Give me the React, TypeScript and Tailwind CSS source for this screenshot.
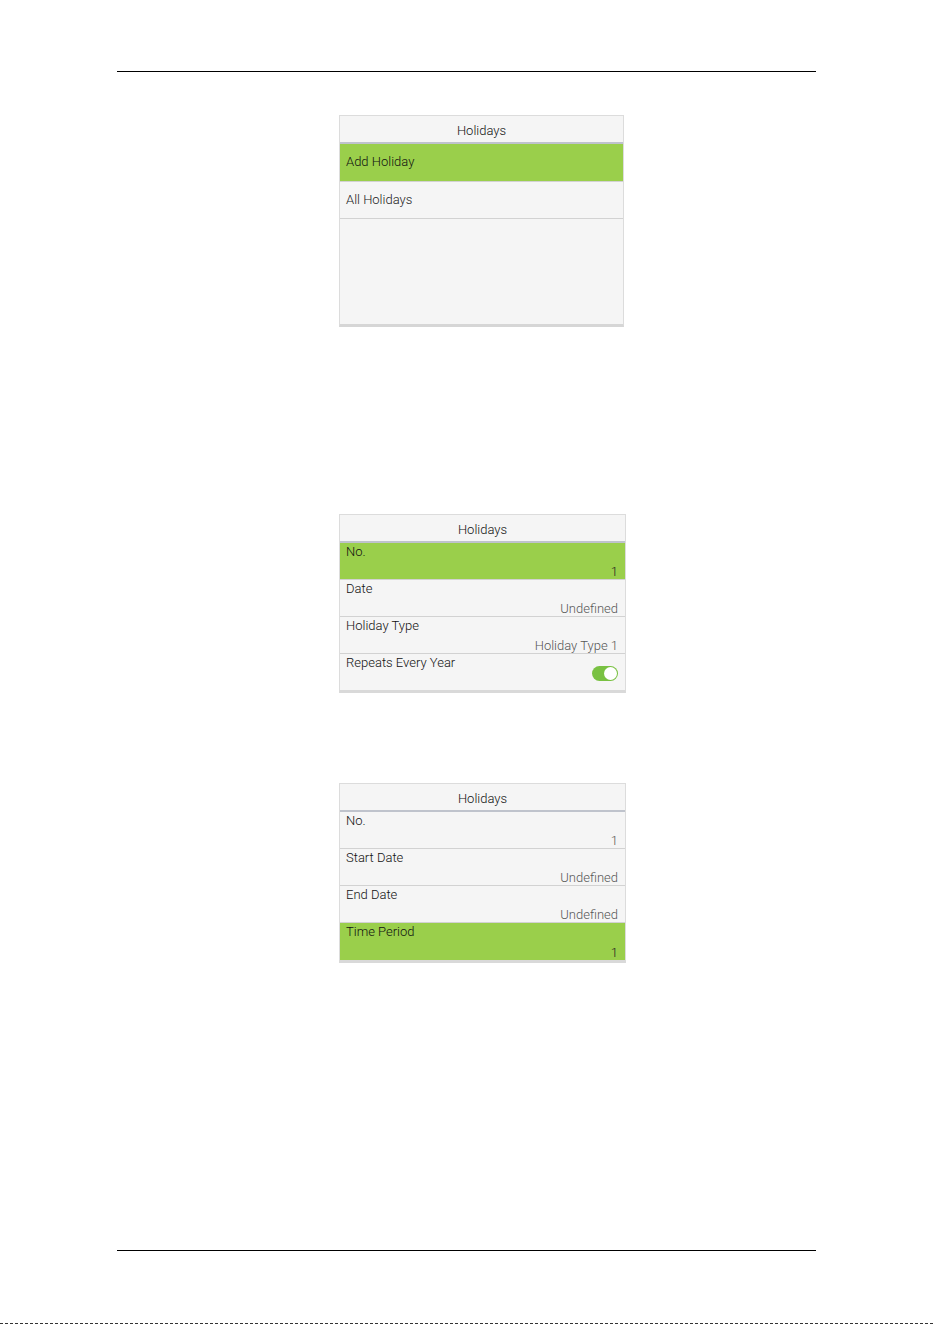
import React from "react";

const font = { fontFamily: "Roboto, 'Noto Sans', sans-serif" };

function Header() {
  return (
    <div className="h-[28px] pt-[3px] flex items-center justify-center text-[13px] font-light text-[#111] border-b-2 border-[#bfc3cc]">
      Holidays
    </div>
  );
}

function Toggle() {
  return (
    <div className="w-[26px] h-[15px] rounded-full bg-[#79c142] relative">
      <div className="absolute right-[1px] top-[1px] w-[13px] h-[13px] rounded-full bg-white" />
    </div>
  );
}

function Row({
  label,
  value,
  active,
  last,
}: {
  label: string;
  value?: string;
  active?: boolean;
  last?: boolean;
}) {
  return (
    <div
      className={`h-[37px] flex flex-col justify-between pt-[1px] pl-[6px] pr-[7px] text-[13px] font-light leading-[16px] ${
        active ? "bg-[#9acf4b]" : ""
      } ${last ? "" : "border-b border-[#d2d2d2]"}`}
    >
      <div className="text-[#111]">{label}</div>
      <div className={`text-right translate-y-[1px] ${active ? "text-[#222]" : "text-[#555]"}`}>{value}</div>
    </div>
  );
}

export default function App() {
  return (
    <div className="w-[933px] h-[1324px] bg-white relative" style={font}>
      <div className="pt-[71px] px-[117px]">
        <div className="h-px bg-black w-[699px]" />
      </div>

      {/* Panel 1 */}
      <div className="ml-[339px] mt-[43px] w-[285px] bg-[#f5f5f5] border border-[#dcdcdc] border-b-[3px] border-b-[#d6d6d6]">
        <Header />
        <div className="h-[38px] flex items-center pb-[1px] px-[6px] text-[13px] font-light text-[#111] bg-[#9acf4b] border-b border-[#d2d2d2]">
          Add Holiday
        </div>
        <div className="h-[37px] flex items-center pb-[1px] px-[6px] text-[13px] font-light text-[#222] border-b border-[#d2d2d2]">
          All Holidays
        </div>
        <div className="h-[105px]" />
      </div>

      {/* Panel 2 */}
      <div className="ml-[339px] mt-[187px] w-[287px] bg-[#f5f5f5] border border-[#dcdcdc] border-b-[3px] border-b-[#d9d9d9]">
        <Header />
        <Row label="No." value="1" active />
        <Row label="Date" value="Undefined" />
        <Row label="Holiday Type" value="Holiday Type 1" />
        <div className="h-[36px] flex flex-col pt-[1px] pl-[6px] pr-[7px] text-[13px] font-light leading-[16px]">
          <div className="text-[#111]">Repeats Every Year</div>
          <div className="flex justify-end -mt-[5px]">
            <Toggle />
          </div>
        </div>
      </div>

      {/* Panel 3 */}
      <div className="ml-[339px] mt-[90px] w-[287px] bg-[#f5f5f5] border border-[#dcdcdc] border-b-[3px] border-b-[#d9d9d9]">
        <Header />
        <Row label="No." value="1" />
        <Row label="Start Date" value="Undefined" />
        <Row label="End Date" value="Undefined" />
        <Row label="Time Period" value="1" active last />
      </div>

      <div className="absolute left-[117px] top-[1250px] h-px w-[699px] bg-black" />
      <div className="absolute left-0 bottom-0 w-[933px] h-px border-t border-dashed border-[#333]" />
    </div>
  );
}
